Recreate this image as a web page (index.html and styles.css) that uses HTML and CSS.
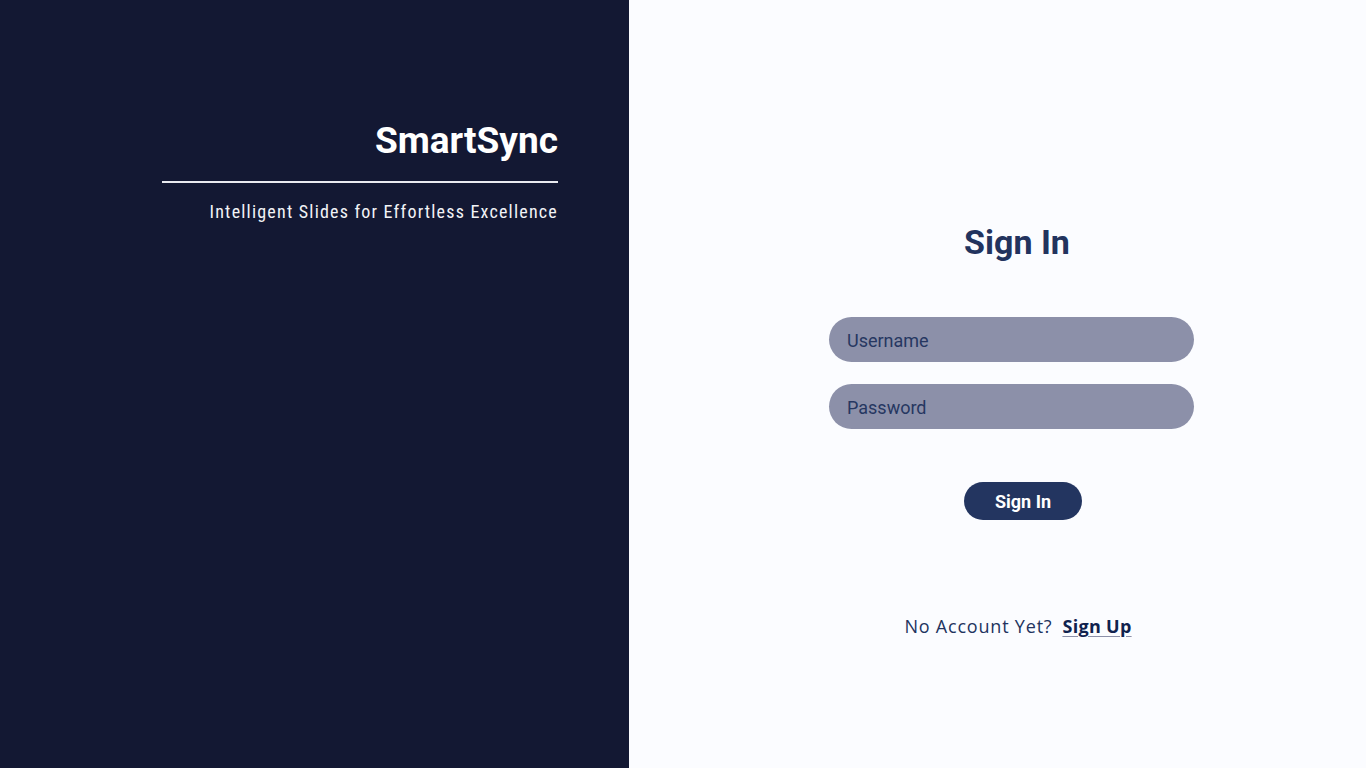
FILE: index.html
```html
<!DOCTYPE html>
<html lang="en">
<head>
<meta charset="utf-8">
<title>SmartSync - Sign In</title>
<link rel="stylesheet" href="styles.css">
</head>
<body>
<div class="page">
  <aside class="brand-panel">
    <div class="brand">
      <h1 class="brand-title">SmartSync</h1>
      <div class="brand-rule"></div>
      <p class="brand-tagline">Intelligent Slides for Effortless Excellence</p>
    </div>
  </aside>
  <main class="form-panel">
    <form class="signin">
      <h2 class="signin-title">Sign In</h2>
      <input class="field field-first" type="text" placeholder="Username">
      <input class="field" type="password" placeholder="Password">
      <button class="btn" type="button">Sign In</button>
      <p class="signup"><span class="signup-text">No Account Yet?</span><a href="#" class="signup-link">Sign Up</a></p>
    </form>
  </main>
</div>
</body>
</html>
```

FILE: styles.css
```css
* { box-sizing: border-box; }
html, body { margin: 0; padding: 0; height: 100%; }
body { font-family: Roboto, "Liberation Sans", sans-serif; }

.page {
  display: flex;
  width: 1366px;
  height: 768px;
}

.brand-panel {
  width: 629px;
  flex: 0 0 629px;
  background: #131833;
  padding: 119px 0 0 162px;
}

.brand {
  width: 396px;
  display: flex;
  flex-direction: column;
  align-items: flex-end;
}

.brand-title {
  margin: 0;
  font-family: Roboto, sans-serif;
  font-weight: 700;
  font-size: 37px;
  line-height: 44px;
  color: #ffffff;
}

.brand-rule {
  width: 396px;
  height: 2px;
  background: #e9eaf0;
  margin-top: 18px;
}

.brand-tagline {
  margin: 18px 0 0;
  font-family: "Roboto Condensed", Roboto, sans-serif;
  font-stretch: condensed;
  font-size: 18px;
  line-height: 22px;
  letter-spacing: 1.2px;
  color: #f2f3f7;
}

.form-panel {
  flex: 1;
  background: #fbfcff;
  padding: 222px 0 0 200px;
}

.signin {
  width: 365px;
  display: flex;
  flex-direction: column;
}

.signin-title {
  margin: 0;
  padding-left: 11px;
  text-align: center;
  font-size: 34px;
  line-height: 40px;
  font-weight: 700;
  color: #22335e;
}

.field {
  width: 365px;
  height: 45px;
  border: none;
  border-radius: 23px;
  background: #8c90a9;
  padding: 1px 18px 0;
  margin-top: 22px;
  font-family: Roboto, sans-serif;
  font-size: 18px;
  color: #22335e;
  outline: none;
}
.field::placeholder { color: #263761; }
.field-first { margin-top: 55px; }

.btn {
  align-self: center;
  margin: 53px 0 0 23px;
  width: 118px;
  height: 38px;
  border: none;
  border-radius: 19px;
  background: #233560;
  color: #ffffff;
  font-family: Roboto, sans-serif;
  font-weight: 700;
  font-size: 18px;
  padding: 0;
}

.signup {
  margin: 94px 0 0;
  padding-left: 13px;
  text-align: center;
  font-family: "Open Sans", sans-serif;
  font-size: 18px;
  line-height: 24px;
  color: #22335e;
}

.signup-text {
  letter-spacing: 0.8px;
}

.signup-link {
  margin-left: 10px;
  font-weight: 700;
  letter-spacing: 0.3px;
  color: #10224e;
  text-decoration: underline;
  text-decoration-color: #8c90a9;
  text-underline-offset: 3px;
}
```
